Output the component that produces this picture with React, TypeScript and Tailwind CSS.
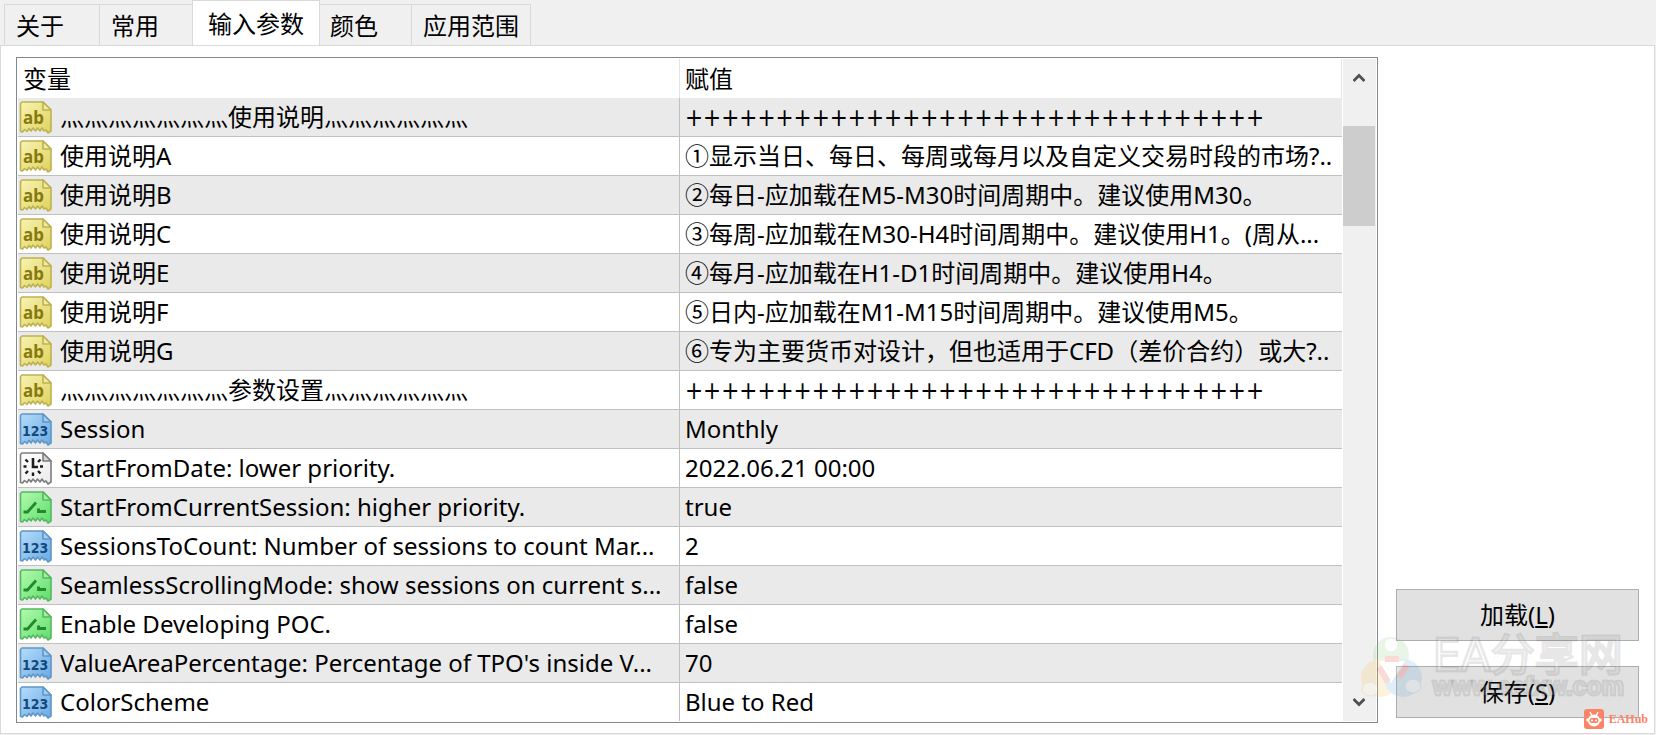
import { useState } from "react";

type Kind = "text" | "int" | "date" | "bool";

const params: { kind: Kind; name: string; value: string }[] = [
  { kind: "text", name: "灬灬灬灬灬灬灬使用说明灬灬灬灬灬灬", value: "++++++++++++++++++++++++++++++++" },
  { kind: "text", name: "使用说明A", value: "①显示当日、每日、每周或每月以及自定义交易时段的市场?.." },
  { kind: "text", name: "使用说明B", value: "②每日-应加载在M5-M30时间周期中。建议使用M30。" },
  { kind: "text", name: "使用说明C", value: "③每周-应加载在M30-H4时间周期中。建议使用H1。(周从..." },
  { kind: "text", name: "使用说明E", value: "④每月-应加载在H1-D1时间周期中。建议使用H4。" },
  { kind: "text", name: "使用说明F", value: "⑤日内-应加载在M1-M15时间周期中。建议使用M5。" },
  { kind: "text", name: "使用说明G", value: "⑥专为主要货币对设计，但也适用于CFD（差价合约）或大?.." },
  { kind: "text", name: "灬灬灬灬灬灬灬参数设置灬灬灬灬灬灬", value: "++++++++++++++++++++++++++++++++" },
  { kind: "int", name: "Session", value: "Monthly" },
  { kind: "date", name: "StartFromDate: lower priority.", value: "2022.06.21 00:00" },
  { kind: "bool", name: "StartFromCurrentSession: higher priority.", value: "true" },
  { kind: "int", name: "SessionsToCount: Number of sessions to count Mar...", value: "2" },
  { kind: "bool", name: "SeamlessScrollingMode: show sessions on current s...", value: "false" },
  { kind: "bool", name: "Enable Developing POC.", value: "false" },
  { kind: "int", name: "ValueAreaPercentage: Percentage of TPO's inside V...", value: "70" },
  { kind: "int", name: "ColorScheme", value: "Blue to Red" },
];

const palette: Record<Kind, { from: string; to: string; edge: string; ink: string; fold: string }> = {
  text: { from: "#f8f3b4", to: "#dfd25c", edge: "#bdb250", ink: "#85790f", fold: "#f3eba0" },
  int: { from: "#b4dcfb", to: "#6aa9e2", edge: "#5f97c8", ink: "#14487c", fold: "#a4cff5" },
  date: { from: "#ffffff", to: "#ebebeb", edge: "#7c7c7c", ink: "#1c1c1c", fold: "#d6d6d6" },
  bool: { from: "#b2fbae", to: "#5fdc6c", edge: "#55b861", ink: "#218a2c", fold: "#a0f0a0" },
};

const SHEET =
  "M3 2H24L32 10V31L29 33L27 30L25 31L23 28L21 31L18.500 28L16.500 31L14 28L12 31L10 28.500L8 31.500L5.500 29.500L3.500 32L1.500 31.500V3.500Z";

function KindIcon({ kind }: { kind: Kind }) {
  const c = palette[kind];
  return (
    <svg viewBox="0 0 34 34" className="size-[34px] shrink-0" aria-hidden="true">
      <defs>
        <linearGradient id={`sheet-${kind}`} x1="0" y1="0" x2="1" y2="1">
          <stop offset="0" stopColor={c.from} />
          <stop offset="1" stopColor={c.to} />
        </linearGradient>
      </defs>
      <path d={SHEET} fill={`url(#sheet-${kind})`} stroke={c.edge} strokeWidth="1.600" strokeLinejoin="round" />
      <path d="M24 2V10H32Z" fill={c.fold} stroke={c.edge} strokeWidth="1.600" strokeLinejoin="round" />
      {kind === "text" && (
        <text x="4" y="24" fontSize="17" fontWeight="700" fontFamily="Noto Sans" fill={c.ink}>
          ab
        </text>
      )}
      {kind === "int" && (
        <text x="3" y="24" fontSize="14" fontWeight="700" fontFamily="DejaVu Sans Condensed" fill={c.ink}>
          123
        </text>
      )}
      {kind === "date" && (
        <g stroke={c.ink} strokeWidth="2" fill="none">
          <path d="M14 7V16H19" strokeWidth="2.600" />
          <path d="M4.500 15.500H7.500M21 15.500H24M14 21.500V25M6.500 8.500L9 11M21.500 8.500L19 11M6.500 22.500L9 20M21.500 22.500L19 20" strokeWidth="2.400" />
        </g>
      )}
      {kind === "bool" && (
        <path d="M4.500 22H8.500L17 12.500M19.500 18.500V21.500H27" stroke={c.ink} strokeWidth="2.800" fill="none" />
      )}
    </svg>
  );
}

function Chevron({ down = false }: { down?: boolean }) {
  return (
    <svg viewBox="0 0 12 10" className="h-[10px] w-3" aria-hidden="true">
      <path d={down ? "M0.500 2L6 7.500L11.500 2" : "M0.500 8L6 2.500L11.500 8"} fill="none" stroke="#505050" strokeWidth="2.800" />
    </svg>
  );
}

const tabs = [
  { label: "关于", width: "w-[95px]" },
  { label: "常用", width: "w-[95px]" },
  { label: "输入参数", width: "w-[124px]" },
  { label: "颜色", width: "w-[93px]" },
  { label: "应用范围", width: "w-[119px]" },
];

function Watermark() {
  return (
    <div className="pointer-events-none absolute right-[30px] bottom-8 flex items-center gap-2.5 select-none" aria-hidden="true">
      <svg viewBox="0 0 62 66" className="h-[66px] w-[62px] opacity-20">
        <circle cx="30" cy="20" r="18" fill="#8fd08a" />
        <circle cx="19" cy="43" r="19" fill="#f6c85a" />
        <circle cx="42" cy="43" r="19" fill="#6aaede" />
        <path d="M18 26L30 48L44 26Z" fill="#ffffff" />
        <path d="M24 24H38" stroke="#e8483c" strokeWidth="6" />
        <path d="M46 30L38 43" stroke="#e8483c" strokeWidth="6" />
        <path d="M18 32L27 47" stroke="#e8483c" strokeWidth="6" />
        <circle cx="30" cy="10" r="7" fill="#f2faf1" stroke="#7cc476" />
        <ellipse cx="9" cy="54" rx="8" ry="7" fill="#fdf6df" stroke="#e0b34a" />
        <ellipse cx="52" cy="51" rx="8" ry="7" fill="#d3e8f7" stroke="#5a9fd2" />
      </svg>
      <div className='flex flex-col font-["DejaVu_Sans","Noto_Sans_CJK_SC",sans-serif] whitespace-nowrap text-white/20 [-webkit-text-stroke:3px_rgba(0,0,0,0.09)]'>
        <span className="text-[44px] leading-9">EA分享网</span>
        <span className='font-["Liberation_Sans",sans-serif] text-[25px] leading-6 font-bold'>www.eafxw.com</span>
      </div>
    </div>
  );
}

function HubBadge() {
  return (
    <div className="pointer-events-none absolute right-1.5 bottom-1 flex items-center gap-[5px] text-[#fa8468]">
      <svg viewBox="0 0 20 20" className="size-5" aria-hidden="true">
        <rect width="20" height="20" rx="3" fill="#fa8468" />
        <path d="M6 3L8 7M14 3L12 7" stroke="#fff" strokeWidth="1.400" />
        <circle cx="10" cy="11.500" r="6" fill="#fff" />
        <circle cx="4" cy="11" r="1.800" fill="#fff" />
        <circle cx="16" cy="11" r="1.800" fill="#fff" />
        <rect x="5.500" y="9" width="9" height="5" rx="2.500" fill="#fa8468" />
        <circle cx="8" cy="11.500" r="1" fill="#fff" />
        <circle cx="12" cy="11.500" r="1" fill="#fff" />
      </svg>
      <span className='font-["Liberation_Serif",serif] text-xs leading-5 font-bold'>EAHub</span>
    </div>
  );
}

export default function App() {
  const [active, setActive] = useState(2);
  return (
    <div className='flex min-h-screen flex-col bg-[#f0f0f0] pr-px pb-px font-["Noto_Sans","Noto_Sans_CJK_SC",sans-serif] text-2xl leading-8 text-black'>
      <div role="tablist" className="flex h-[45px] items-end pl-1">
        {tabs.map((tab, i) => (
          <div key={tab.label} className={`${tab.width} flex justify-center`}>
            <button
              role="tab"
              aria-selected={i === active}
              onClick={() => setActive(i)}
              className={
                i === active
                  ? "relative -mx-0.5 -mb-px flex h-[46px] flex-1 items-center border border-b-0 border-[#d9d9d9] bg-white pl-[15px] whitespace-nowrap"
                  : "-mr-px flex h-[41px] flex-1 items-center border border-b-0 border-[#d9d9d9] pt-0.5 pl-[11px] whitespace-nowrap"
              }
            >
              {tab.label}
            </button>
          </div>
        ))}
      </div>

      <main className="relative flex flex-1 gap-[18px] border border-[#d9d9d9] bg-white px-[15px] pt-[11px] pb-[10px]">
        <div className="flex min-w-0 flex-1 border border-[#828790] p-px">
          <table className="w-full table-fixed border-separate border-spacing-0 text-left">
            <colgroup>
              <col className="w-1/2" />
              <col className="w-1/2" />
            </colgroup>
            <thead>
              <tr className="h-[39px]">
                <th className="border-r border-[#e5e5e5] p-0 pl-[5px] font-normal">变量</th>
                <th className="border-r border-[#e5e5e5] p-0 pl-[5px] font-normal">赋值</th>
              </tr>
            </thead>
            <tbody>
              {params.map((p, i) => (
                <tr key={i} className="group h-[39px] odd:bg-[#eaeaea] last:h-[38px]">
                  <td className="overflow-hidden border-r border-b border-[#c0c0c0] p-0 group-last:border-b-0">
                    <div className="flex items-center gap-[7px] pl-px whitespace-nowrap">
                      <KindIcon kind={p.kind} />
                      {p.name}
                    </div>
                  </td>
                  <td className="overflow-hidden border-b border-[#c0c0c0] p-0 pl-[5px] whitespace-nowrap group-last:border-b-0">
                    {p.value.startsWith("+") ? (
                      <span className='font-["DejaVu_Sans_Condensed","DejaVu_Sans",sans-serif]'>{p.value}</span>
                    ) : (
                      p.value
                    )}
                  </td>
                </tr>
              ))}
            </tbody>
          </table>
          <div className="flex w-[34px] shrink-0 flex-col border-l border-white bg-[#f0f0f0] pr-px">
            <button aria-label="Scroll up" className="flex h-[38px] items-center justify-center">
              <Chevron />
            </button>
            <div className="flex-1 pt-[29px]">
              <div className="h-[100px] bg-[#cdcdcd]" />
            </div>
            <button aria-label="Scroll down" className="flex h-[38px] items-center justify-center">
              <Chevron down />
            </button>
          </div>
        </div>

        <div className="flex w-[243px] shrink-0 flex-col justify-end gap-[25px] pb-[5px]">
          <button className="h-[52px] border border-[#adadad] bg-[#e1e1e1]">
            加载(<span className="underline underline-offset-2">L</span>)
          </button>
          <button className="h-[52px] border border-[#adadad] bg-[#e1e1e1]">
            保存(<span className="underline underline-offset-2">S</span>)
          </button>
        </div>

        <Watermark />
        <HubBadge />
      </main>
    </div>
  );
}
